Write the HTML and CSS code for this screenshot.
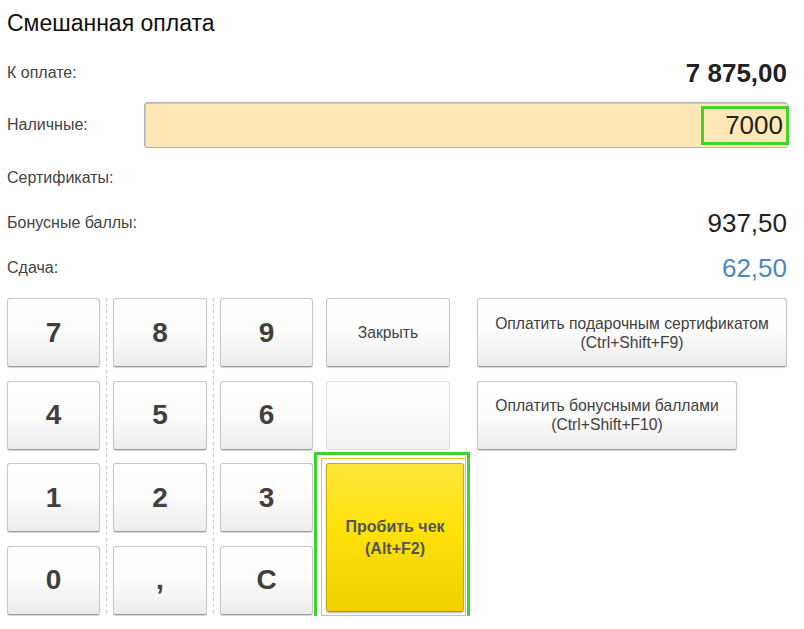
FILE: index.html
```html
<!DOCTYPE html>
<html lang="ru">
<head>
<meta charset="utf-8">
<title>Смешанная оплата</title>
<link rel="stylesheet" href="styles.css">
</head>
<body>
<div class="page">
  <h1 class="title">Смешанная оплата</h1>
  <div class="fields">
    <div class="row">
      <span class="label">К оплате:</span>
      <span class="value bold">7 875,00</span>
    </div>
    <div class="row row-input">
      <span class="label">Наличные:</span>
      <div class="input"><span class="hl">7000</span></div>
    </div>
    <div class="row">
      <span class="label">Сертификаты:</span>
    </div>
    <div class="row">
      <span class="label">Бонусные баллы:</span>
      <span class="value">937,50</span>
    </div>
    <div class="row">
      <span class="label">Сдача:</span>
      <span class="value blue">62,50</span>
    </div>
  </div>
  <div class="keypad">
    <button class="btn digit">7</button>
    <button class="btn digit">8</button>
    <button class="btn digit">9</button>
    <button class="btn text">Закрыть</button>
    <span class="spacer"></span>
    <button class="btn text wide">Оплатить подарочным сертификатом<br>(Ctrl+Shift+F9)</button>

    <button class="btn digit">4</button>
    <button class="btn digit">5</button>
    <button class="btn digit">6</button>
    <button class="btn empty"></button>
    <span class="spacer"></span>
    <button class="btn text medium">Оплатить бонусными баллами<br>(Ctrl+Shift+F10)</button>

    <button class="btn digit r3">1</button>
    <button class="btn digit r3">2</button>
    <button class="btn digit r3">3</button>
    <div class="primary-cell">
      <button class="btn primary">Пробить чек<br>(Alt+F2)</button>
      <span class="focus-ring"></span>
      <span class="highlight-box"></span>
    </div>

    <button class="btn digit r4">0</button>
    <button class="btn digit r4">,</button>
    <button class="btn digit r4">C</button>
  </div>
</div>
</body>
</html>
```

FILE: styles.css
```css
* { box-sizing: border-box; }
html, body { margin: 0; padding: 0; background: #fff; }
body {
  font-family: "Liberation Sans", Arial, sans-serif;
  color: #333;
}
.page {
  width: 804px;
  padding: 10px 16px 0 7px;
}
.title {
  margin: 0;
  font-size: 23px;
  line-height: 26px;
  font-weight: normal;
  color: #111;
}
.fields {
  margin-top: 22px;
  display: flex;
  flex-direction: column;
  gap: 15px;
}
.fields .row:first-child + .row { margin-top: -1px; }
.row {
  height: 30px;
  display: flex;
  align-items: center;
  justify-content: space-between;
}
.row-input { height: 46px; }
.label {
  font-size: 16px;
  color: #444;
  white-space: nowrap;
}
.value {
  font-size: 26px;
  color: #222;
  padding-right: 1px;
}
.value.bold { font-weight: bold; }
.value.blue { color: #4a88c4; }
.input {
  width: 644px;
  height: 46px;
  background: #ffe8b6;
  border: 1px solid #b3b3b3;
  border-radius: 3px;
  box-shadow: inset 1px 1px 0 #c6c6c6;
  display: flex;
  align-items: center;
  justify-content: flex-end;
}
.hl {
  display: inline-flex;
  align-items: center;
  height: 39px;
  margin-right: -2px;
  border: 3px solid #3fd42c;
  padding: 0 3px 0 21px;
  font-size: 26px;
  color: #222;
}
.keypad {
  margin-top: 15px;
  display: grid;
  grid-template-columns: 93px 94px 93px 124px 1px 310px;
  grid-template-rows: repeat(4, 70px);
  column-gap: 13px;
  row-gap: 12.5px;
  background-image:
    repeating-linear-gradient(to bottom, #c8c8c8 0 3px, transparent 3px 6px),
    repeating-linear-gradient(to bottom, #c8c8c8 0 3px, transparent 3px 6px);
  background-size: 1px 100%, 1px 100%;
  background-position: 99px 0, 206px 0;
  background-repeat: no-repeat;
}
.r3 { grid-row: 3; }
.r4 { grid-row: 4; }
.btn {
  font-family: "Liberation Sans", Arial, sans-serif;
  margin: 0;
  padding: 0;
  background: linear-gradient(to bottom, #ffffff 0%, #fdfdfd 45%, #ececec 100%);
  border: 1px solid #c6c6c6;
  border-bottom-color: #9e9e9e;
  border-radius: 3px;
  box-shadow: 0 1px 1px rgba(0,0,0,0.18);
  color: #404040;
  height: 69px;
  cursor: pointer;
}
.digit {
  font-size: 28px;
  font-weight: bold;
}
.text {
  font-size: 15.7px;
  line-height: 19px;
}
.wide { width: 310px; }
.medium { width: 260px; }
.empty {
  background: linear-gradient(to bottom, #ffffff 0%, #fcfcfc 50%, #f1f1f1 100%);
  border-color: #dcdcdc;
  box-shadow: none;
}
.primary-cell {
  grid-column: 4 / span 2;
  grid-row: 3 / span 2;
  position: relative;
  height: 149px;
}
.primary {
  width: 100%;
  height: 149px;
  background: linear-gradient(to bottom, #ffe73c 0%, #fde10a 45%, #efd000 100%);
  border: 1px solid #c9ad10;
  border-bottom-color: #a89320;
  box-shadow: 0 1px 2px rgba(0,0,0,0.3);
  color: #555;
  font-size: 16px;
  line-height: 22px;
  font-weight: bold;
}
.focus-ring {
  position: absolute;
  left: -5px;
  top: -5px;
  right: -2px;
  bottom: -4px;
  border: 1px solid #f2c02e;
  pointer-events: none;
}
.highlight-box {
  position: absolute;
  left: -12px;
  top: -11px;
  right: -6px;
  bottom: -9px;
  border: 3px solid #3fd42c;
  pointer-events: none;
}
```
